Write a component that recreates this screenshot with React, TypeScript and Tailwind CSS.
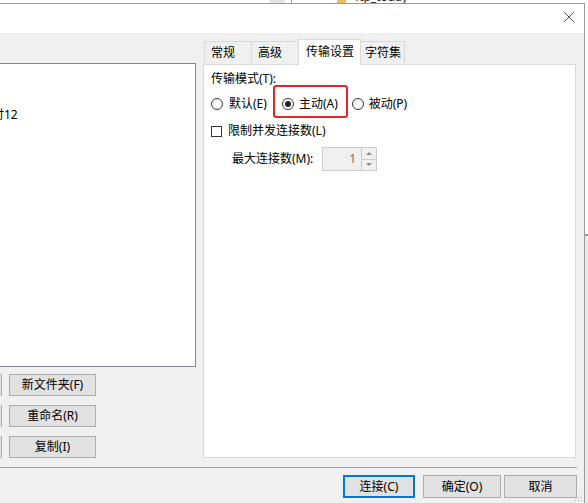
import { X } from "lucide-react";

const Radio = ({ checked }: { checked?: boolean }) => (
  <span className="flex size-[12px] shrink-0 items-center justify-center rounded-full border border-[#333] bg-white">
    {checked && <span className="size-[6px] rounded-full bg-[#222]" />}
  </span>
);

const Btn = ({ label, w, primary }: { label: string; w: string; primary?: boolean }) => (
  <div
    className={`flex h-[23px] items-center justify-center bg-[#e1e1e1] ${w} ${
      primary ? "border-2 border-[#0078d7]" : "border border-[#adadad]"
    }`}
  >
    {label}
  </div>
);

export default function App() {
  const tabs = [
    { label: "常规", w: "w-[48px]", pl: "pl-[6px]" },
    { label: "高级", w: "w-[48px]", pl: "pl-[6px]" },
    { label: "传输设置", w: "w-[63px]", pl: "pl-[7px]", active: true },
    { label: "字符集", w: "w-[45px]", pl: "pl-[4px]" },
  ];

  return (
    <div className="flex h-[503px] w-[588px] flex-col overflow-hidden bg-white font-['Noto_Sans','Noto_Sans_CJK_SC',sans-serif] text-[12px] text-black">
      {/* window behind */}
      <div className="flex h-[3px] shrink-0 overflow-hidden bg-white">
        <div className="w-[270px]" />
        <div className="w-[15px] bg-[#e3e3e3]" />
        <div className="w-[6px]" />
        <div className="w-px bg-[#a0a0a0]" />
        <div className="w-[45px]" />
        <div className="w-[9px] bg-[#e9c35a]" />
        <div className="ml-[9px] -mt-[10px] leading-[13px] text-[#222]">ftp_today</div>
      </div>

      <div className="flex flex-1">
        {/* dialog */}
        <div className="relative flex w-[585px] shrink-0 flex-col border-t border-r border-[#9b9b9b] bg-[#f0f0f0]">
          <div className="flex h-[29px] justify-end bg-white pt-[3px] pr-[5px]">
            <X className="size-[20px] text-black" strokeWidth={0.8} />
          </div>

          <div className="flex h-[425px]">
            {/* left */}
            <div className="flex w-[196px] shrink-0 flex-col pt-[30px]">
              <div className="h-[304px] overflow-hidden border border-l-0 border-[#828790] bg-white">
                <div className="-ml-[8px] mt-[43px] leading-[16px]">付12</div>
              </div>
              <div className="mt-[7px] flex flex-col gap-[9px]">
                {["新文件夹(F)", "重命名(R)", "复制(I)"].map((l) => (
                  <div key={l} className="flex h-[22px]">
                    <div className="w-[2px] border-r border-[#adadad] bg-[#e1e1e1]" />
                    <div className="ml-[7px] flex w-[87px] items-center justify-center border border-[#adadad] bg-[#e1e1e1]">
                      {l}
                    </div>
                  </div>
                ))}
              </div>
            </div>

            {/* tabs */}
            <div className="ml-[7px] flex w-[373px] flex-col pt-[6px]">
              <div className="flex h-[25px] items-end pl-[1px]">
                {tabs.map((t, i) => (
                  <div
                    key={t.label}
                    className={`flex items-center border border-b-0 border-[#d9d9d9] ${t.w} ${t.pl} ${
                      i > 0 ? "-ml-px" : ""
                    } ${t.active ? "relative z-10 -mb-px h-[26px] bg-white pb-[2px]" : "h-[23px] bg-[#f0f0f0]"}`}
                  >
                    {t.label}
                  </div>
                ))}
              </div>
              <div className="relative flex h-[394px] flex-col border border-[#d9d9d9] bg-white pt-[6px] pl-[7px]">
                <div className="flex h-[16px] items-center">传输模式(T):</div>

                <div className="mt-[8px] flex h-[18px] items-center">
                  <Radio />
                  <span className="ml-[6px]">默认(E)</span>
                  <span className="ml-[15px]">
                    <Radio checked />
                  </span>
                  <span className="ml-[5px]">主动(A)</span>
                  <span className="ml-[14px]">
                    <Radio />
                  </span>
                  <span className="ml-[5px]">被动(P)</span>
                </div>

                <div className="mt-[9px] flex h-[18px] items-center">
                  <span className="size-[11px] border border-[#333] bg-white" />
                  <span className="ml-[6px]">限制并发连接数(L)</span>
                </div>

                <div className="mt-[7px] flex h-[24px] items-center pl-[21px]">
                  <span className="w-[90px]">最大连接数(M):</span>
                  <div className="flex h-[24px] w-[55px] border border-[#cccccc] bg-[#f0f0f0]">
                    <div className="flex flex-1 items-center justify-end pr-[5px] text-[#6d6d6d]">1</div>
                    <div className="flex w-[15px] flex-col border-l border-[#cccccc]">
                      <div className="flex flex-1 items-center justify-center border-b border-[#cccccc]">
                        <span className="h-0 w-0 border-x-[3px] border-b-[3px] border-x-transparent border-b-[#8a8a8a]" />
                      </div>
                      <div className="flex flex-1 items-center justify-center">
                        <span className="h-0 w-0 border-x-[3px] border-t-[3px] border-x-transparent border-t-[#8a8a8a]" />
                      </div>
                    </div>
                  </div>
                </div>

                {/* annotation box */}
                <div className="absolute top-[20px] left-[69px] h-[33px] w-[75px] rounded-[3px] border-2 border-[#e3262b]" />
              </div>
            </div>
          </div>

          <div className="mt-[9px] mr-[7px] border-t border-[#a0a0a0]" />

          <div className="mt-[7px] flex justify-end pr-[7px]">
            <Btn label="连接(C)" w="w-[72px]" primary />
            <div className="w-[8px]" />
            <Btn label="确定(O)" w="w-[78px]" />
            <div className="w-[3px]" />
            <Btn label="取消" w="w-[73px]" />
          </div>

          {/* size grip */}
          <svg className="absolute right-[1px] bottom-[1px]" width="8" height="8" viewBox="0 0 8 8">
            <g fill="#b5b5b5">
              <rect x="6" y="0" width="1" height="1" />
              <rect x="3" y="3" width="1" height="1" />
              <rect x="6" y="3" width="1" height="1" />
              <rect x="0" y="6" width="1" height="1" />
              <rect x="3" y="6" width="1" height="1" />
              <rect x="6" y="6" width="1" height="1" />
            </g>
          </svg>
        </div>

        {/* window behind, right */}
        <div className="flex w-[3px] flex-col">
          <div className="h-[231px] bg-white" />
          <div className="h-[2px] bg-[#9a9a9a]" />
          <div className="flex-1 bg-[#ececec]" />
        </div>
      </div>
    </div>
  );
}
